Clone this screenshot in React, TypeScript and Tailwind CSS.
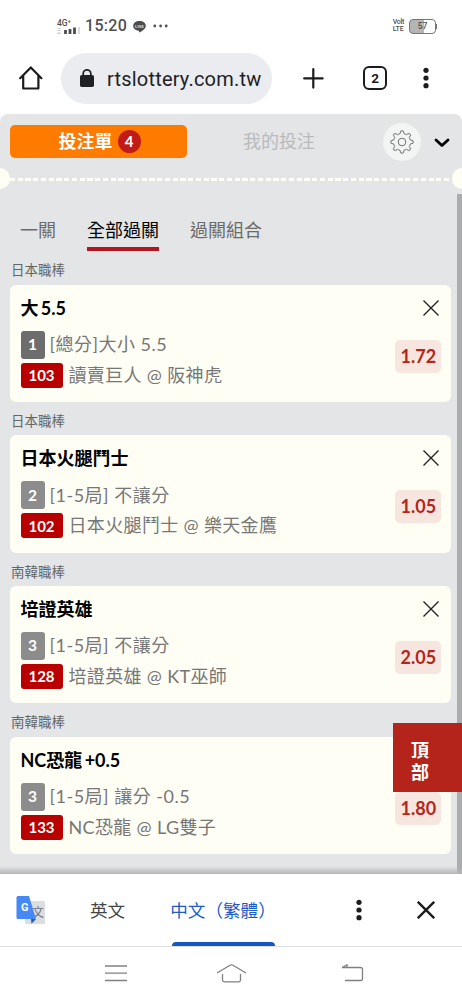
type Bet = {
  league: string;
  pick: string;
  count: number;
  countClass: string;
  market: string;
  code: string;
  match: string;
  odds: string;
};

const bets: Bet[] = [
  { league: '日本職棒', pick: '大 5.5', count: 1, countClass: 'bg-[#6d6d6d]', market: '[總分]大小 5.5', code: '103', match: '讀賣巨人 @ 阪神虎', odds: '1.72' },
  { league: '日本職棒', pick: '日本火腿鬥士', count: 2, countClass: 'bg-[#8c8c8c]', market: '[1-5局] 不讓分', code: '102', match: '日本火腿鬥士 @ 樂天金鷹', odds: '1.05' },
  { league: '南韓職棒', pick: '培證英雄', count: 3, countClass: 'bg-[#8c8c8c]', market: '[1-5局] 不讓分', code: '128', match: '培證英雄 @ KT巫師', odds: '2.05' },
  { league: '南韓職棒', pick: 'NC恐龍 +0.5', count: 3, countClass: 'bg-[#8c8c8c]', market: '[1-5局] 讓分 -0.5', code: '133', match: 'NC恐龍 @ LG雙子', odds: '1.80' }
];

const MoreDots = () => (
  <svg className="h-6 w-6" viewBox="0 0 24 24" fill="#1c1c1e">
    <circle cx="12" cy="4.3" r="2.6" />
    <circle cx="12" cy="12" r="2.6" />
    <circle cx="12" cy="19.7" r="2.6" />
  </svg>
);

const StatusBar = () => (
  <div className="flex h-[52px] items-center pl-[57px] pr-[25px] text-[#505050]">
    <div className="flex h-[15px] w-6 flex-col justify-between">
      <span className="text-[8.5px] font-medium leading-[8px]">4G⁺</span>
      <svg className="h-[7px] w-[23px]" viewBox="0 0 23 7">
        <path d="M2 1v1M2 3v1M2 5.5v1.5" stroke="#c8c8c8" strokeWidth="3" />
        <path d="M8.5 3v4M13 2v5M17.5 0.5v6.5" stroke="#4c4c4c" strokeWidth="2.8" />
        <path d="M22 0v7" stroke="#dcdcdc" strokeWidth="2" />
      </svg>
    </div>
    <span className="ml-[4px] text-[16px] font-medium leading-none tracking-[0.3px]">15:20</span>
    <svg className="ml-[6px] mt-px h-3 w-[13px]" viewBox="0 0 13 12">
      <path d="M6.5 0C2.9 0 0.2 2 0.2 4.9C0.2 7.8 2.9 9.4 6 9.7V11.6C9 10 12.8 7.8 12.8 4.9C12.8 2 10.1 0 6.5 0Z" fill="#4d4d4d" />
      <text x="6.5" y="6.7" fontSize="4.2" fontWeight="700" textAnchor="middle" fill="#d5d5d5">LINE</text>
    </svg>
    <svg className="ml-[7px] h-1 w-[15px]" viewBox="0 0 15 4" fill="#505050">
      <circle cx="1.8" cy="2" r="1.4" />
      <circle cx="7.6" cy="2" r="1.4" />
      <circle cx="13.2" cy="2" r="1.4" />
    </svg>
    <div className="ml-auto flex flex-col text-[7px] font-medium leading-[7px]">
      <span className="tracking-[-0.3px]">Volt</span>
      <span className="tracking-[-0.1px]">LTE</span>
    </div>
    <div className="ml-[5px] flex items-center">
      <div className="flex h-[15px] w-[27px] items-center justify-center rounded-[4px] border border-[#777] bg-[linear-gradient(90deg,#b5b5b5_57%,#fff_57%)] text-[8.5px] font-medium">57</div>
      <div className="h-[5px] w-px bg-[#777]" />
    </div>
  </div>
);

const BrowserBar = () => (
  <div className="flex h-[62px] items-start">
    <svg className="ml-[19px] mt-[13px] h-6 w-6" viewBox="0 0 24 24" fill="none" stroke="#1c1c1e" strokeWidth="2.2" strokeLinecap="round" strokeLinejoin="round">
      <path d="M1.2 12.2L11.8 1.4L22.4 12.2M4.2 10V22.5H19.4V10" />
    </svg>
    <div className="ml-[18px] flex h-[51px] w-[211px] items-center rounded-full bg-[#ebecf0] pl-[19px] text-[#202124]">
      <svg className="mb-px h-[18px] w-[14px]" viewBox="0 0 14 18">
        <path d="M3.2 8V4.6a3.8 3.8 0 0 1 7.6 0V8" fill="none" stroke="#202124" strokeWidth="1.7" />
        <rect x="0" y="6" width="14" height="12" rx="1.8" fill="#202124" />
      </svg>
      <span className="ml-[13px] mt-px whitespace-nowrap text-[20px] tracking-[0.2px]">rtslottery.com.tw</span>
    </div>
    <svg className="ml-[31px] mt-[15px] h-[21px] w-[21px]" viewBox="0 0 21 21" stroke="#1c1c1e" strokeWidth="2.2" strokeLinecap="round">
      <path d="M10.3 1.2V19.6M1.2 10.4H19.6" />
    </svg>
    <div className="ml-[39px] mt-[13px] flex h-6 w-6 items-center justify-center rounded-[6px] border-2 border-[#1c1c1e] text-[13.5px] font-bold text-[#1c1c1e]">2</div>
    <div className="ml-[27px] mt-[13px]">
      <MoreDots />
    </div>
  </div>
);

const SlipHeader = () => (
  <div className="flex h-[54px] items-center pl-[10px] pt-px">
    <div className="flex h-[33px] w-[177px] items-center justify-center rounded-[5px] bg-[#ff7b00] text-white">
      <span className="ml-[2px] text-[18px] font-bold">投注單</span>
      <span className="ml-[5px] flex h-[23px] w-[23px] items-center justify-center rounded-full bg-[#c11b17] text-[15px] font-bold">4</span>
    </div>
    <span className="ml-[56px] w-[72px] whitespace-nowrap text-[18px] text-[#b9babb]">我的投注</span>
    <div className="ml-[68px] flex h-[38px] w-[38px] items-center justify-center rounded-full bg-[#f3f4f4]">
      <svg className="h-6 w-6" viewBox="0 0 24 24" fill="none" stroke="#707070" strokeWidth="1" strokeLinejoin="round">
        <path d="M10 3.7L10.8 1Q12 0.4 13.2 1L14 3.7Q15.3 4 16.4 4.7L18.9 3.4Q20.2 3.8 20.6 5.1L19.3 7.6Q20 8.7 20.3 10L23 10.8Q23.6 12 23 13.2L20.3 14Q20 15.3 19.3 16.4L20.6 18.9Q20.2 20.2 18.9 20.6L16.4 19.3Q15.3 20 14 20.3L13.2 23Q12 23.6 10.8 23L10 20.3Q8.7 20 7.6 19.3L5.1 20.6Q3.8 20.2 3.4 18.9L4.7 16.4Q4 15.3 3.7 14L1 13.2Q0.4 12 1 10.8L3.7 10Q4 8.7 4.7 7.6L3.4 5.1Q3.8 3.8 5.1 3.4L7.6 4.7Q8.7 4 10 3.7Z" />
        <circle cx="12" cy="12" r="3.8" />
      </svg>
    </div>
    <svg className="ml-[13px] mt-[2px] h-[10px] w-4" viewBox="0 0 16 10" fill="none" stroke="#000" strokeWidth="2.8" strokeLinecap="round" strokeLinejoin="round">
      <path d="M2 2L8 7.6L14 2" />
    </svg>
  </div>
);

// Ticket-style perforation: half circles on both edges with a dashed line
const Perforation = () => (
  <div className="flex h-[21px] items-center">
    <div className="h-[21px] w-[10px] rounded-r-full bg-[#fffef4]" />
    <div className="mt-[2px] h-[3px] flex-1 bg-[repeating-linear-gradient(90deg,#fffef8_0_5px,transparent_5px_7.75px)]" />
    <div className="h-[21px] w-[10px] rounded-l-full bg-[#fffef4]" />
  </div>
);

const BetCard = ({ bet }: { bet: Bet }) => (
  <div className="h-[150.6px]">
    <div className="h-[33.4px] pl-px pt-[9px] text-[13.5px] leading-[20px] text-[#666]">{bet.league}</div>
    <div className="flex h-[117.2px] justify-between rounded-[6px] bg-[#fffef5] pl-[10.5px] pr-[10px]">
      <div className="whitespace-nowrap">
        <div className="pt-[10px] text-[18px] font-bold leading-[26px] text-black [word-spacing:-2px]">{bet.pick}</div>
        <div className="mt-[10px] flex h-7 items-center">
          <span className={`flex h-7 w-6 items-center justify-center rounded-[3px] text-[15.5px] font-bold text-white ${bet.countClass}`}>{bet.count}</span>
          <span className="ml-[5px] text-[18px] tracking-[0.5px] text-[#777]">{bet.market}</span>
        </div>
        <div className="mt-1 flex h-[25px] items-center">
          <span className="flex h-[25px] w-[42px] items-center justify-center rounded-[3px] bg-[#b80000] text-[15px] font-bold text-white">{bet.code}</span>
          <span className="ml-[6px] text-[18px] tracking-[0.35px] text-[#777]">{bet.match}</span>
        </div>
      </div>
      <div className="flex flex-col items-end">
        <svg className="mr-[2.5px] mt-[15px] h-4 w-4" viewBox="0 0 16 16" stroke="#222" strokeWidth="1.4">
          <path d="M0.5 0.5L15.5 15.5M15.5 0.5L0.5 15.5" />
        </svg>
        <div className="mt-6 flex h-[33px] w-[46px] items-center justify-center rounded-[5px] bg-[#f7e6df] text-[18px] font-bold text-[#b4261c]">{bet.odds}</div>
      </div>
    </div>
  </div>
);

const TranslateBar = () => (
  <div className="flex h-[73px] items-center border-b border-[#dedede] bg-white">
    <svg className="ml-4 h-7 w-[29px]" viewBox="0 0 29 28">
      <rect x="9" y="5" width="20" height="23" rx="1.5" fill="#dcdde0" />
      <text x="22" y="21" fontSize="12" textAnchor="middle" fill="#68737c">文</text>
      <path d="M15 23H20L15.5 27.8Z" fill="#2e56b8" />
      <path d="M2 0H13L20 23H2Q0.5 23 0.5 21.5V1.5Q0.5 0 2 0Z" fill="#4688f4" />
      <text x="8.8" y="15.4" fontSize="11" fontWeight="700" textAnchor="middle" fill="#fff">G</text>
    </svg>
    <span className="ml-[45px] w-9 whitespace-nowrap pt-[3px] text-[17.6px] text-[#444]">英文</span>
    <div className="ml-[44px] flex h-[72px] w-[106px] flex-col items-center">
      <span className="flex flex-1 items-center whitespace-nowrap pt-[6px] text-[17.6px] text-[#1b5cc7]">中文（繁體）</span>
      <div className="h-[4px] w-[103px] rounded-t-[4px] bg-[#1556c4]" />
    </div>
    <div className="ml-[71px]">
      <MoreDots />
    </div>
    <svg className="ml-[46px] h-[18px] w-[18px]" viewBox="0 0 18 18" stroke="#1c1c1e" strokeWidth="2.4">
      <path d="M0.8 0.8L17.2 17.2M17.2 0.8L0.8 17.2" />
    </svg>
  </div>
);

const SystemNav = () => (
  <div className="flex h-[53px] items-start bg-white pt-[17px]">
    <svg className="ml-[105px] h-[18px] w-[22px]" viewBox="0 0 22 18" stroke="#808080" strokeWidth="1.3">
      <path d="M0 2H22M0 9.2H22M0 16.5H22" />
    </svg>
    <svg className="ml-[89px] h-[19px] w-[31px]" viewBox="0 0 31 19" fill="none" stroke="#808080" strokeWidth="1.3">
      <path d="M1 9L14 1.3Q15.5 0.5 17 1.3L30 9M6.5 10V16Q6.5 17.8 8.3 17.8H22.7Q24.5 17.8 24.5 16V10" />
    </svg>
    <svg className="ml-[94px] h-[18px] w-[24px]" viewBox="0 0 24 18" fill="none" stroke="#808080" strokeWidth="1.3">
      <path d="M1 3.5H19.5Q21.5 3.5 21.5 5.5V14.5Q21.5 16.5 19.5 16.5H4M1 3.5L6 0.8V3" />
    </svg>
  </div>
);

const App = () => {
  return (
    <div className="flex h-[1000px] w-[462px] flex-col overflow-hidden bg-white font-['Roboto','Noto_Sans_CJK_TC',sans-serif]">
      <StatusBar />
      <div className="pt-px">
        <BrowserBar />
      </div>
      <main className="relative -mt-px h-[760px] overflow-hidden rounded-t-[8px] bg-[#e3e5e7] font-['Lato','Noto_Sans_CJK_TC',sans-serif]">
        <SlipHeader />
        <Perforation />
        <div className="flex">
          <div className="w-[457px] px-[10px]">
            <div className="ml-[10px] flex h-[62.4px] items-end gap-[31px] text-[18px] leading-[26px] text-[#6b6b6b]">
              <span className="pb-[8px]">一關</span>
              <span className="border-b-4 border-[#b3171d] pb-[4px] text-black">全部過關</span>
              <span className="pb-[8px]">過關組合</span>
            </div>
            <div className="w-[441.4px]">
              {bets.map((bet) => (
                <BetCard key={bet.code} bet={bet} />
              ))}
            </div>
          </div>
          <div className="mt-[5px] h-[690px] w-[5px] bg-[#aaacad]" />
        </div>

        {/* Back to top */}
        <button className="absolute right-0 top-[609px] flex h-[69px] w-[69px] flex-col items-center justify-center pr-[15px] pt-[8px] text-[18px] font-bold leading-[21.5px] text-white bg-[#b4241b]">
          <span>頂</span>
          <span>部</span>
        </button>
        <div className="absolute bottom-0 left-0 h-[8px] w-full bg-gradient-to-b from-transparent to-[#b4b5b7]" />
      </main>
      <TranslateBar />
      <SystemNav />
    </div>
  );
};

export default App;
